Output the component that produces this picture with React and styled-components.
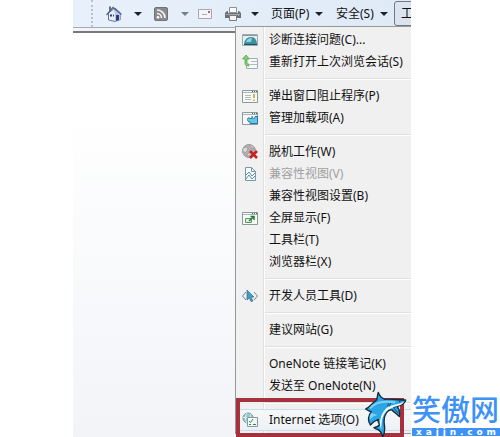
import React from "react"
import styled, { createGlobalStyle, css } from "styled-components"

const GlobalStyle = createGlobalStyle`
  * {
    box-sizing: border-box;
  }

  body {
    margin: 0;
    background: #fff;
    color: #111;
    font: 12px/16px "Noto Sans", "Noto Sans CJK SC", sans-serif;
  }

  button {
    margin: 0;
    padding: 0;
    border: 0;
    background: none;
    color: inherit;
    font: inherit;
    text-align: left;
    white-space: nowrap;
  }
`

const Page = styled.main`
  position: relative;
  padding: 0 89px 0 73px;
`

const Browser = styled.section`
  overflow: hidden;
  background: linear-gradient(#fff 25%, #f2f4f8);
`

const Toolbar = styled.div`
  display: flex;
  align-items: center;
  height: 27px;
  padding-left: 18px;
  background: linear-gradient(to right, #e8f1fb, #dfeaf7);
`

const Grip = styled.span`
  height: 27px;
  margin-right: 13px;
  border-left: 2px dotted #b9c3cf;
`

const ToolButton = styled.button`
  display: flex;
  flex: none;
  align-items: center;
  justify-content: space-between;
  width: ${({ $width }) => $width}px;
  margin-right: ${({ $gap }) => $gap}px;
`

const ToolsButton = styled.button`
  flex: none;
  width: 48px;
  height: 25px;
  padding-left: 6px;
  border: 1px solid #6f7885;
  border-radius: 3px;
  background: #dbe3ee;
`

const Arrow = styled.span`
  border: 4px solid transparent;
  border-top-color: ${({ $dim }) => ($dim ? "#71808f" : "#1b222c")};
  border-bottom: 0;
`

const Edge = styled.div`
  height: 6px;
  border-top: 1px solid #a9adb3;
  border-bottom: 2px solid #77797c;
  background: #f1f4f8;
`

const Content = styled.div`
  display: flex;
  justify-content: flex-end;
  padding-bottom: 3px;
`

const Menu = styled.div`
  position: relative;
  width: 176px;
  margin-top: -7px;
  padding: 2px 0;
  border: 1px solid #979797;
  border-right: 0;
  background: linear-gradient(
    to right,
    #f1f1f1 27px,
    #e0e0e0 27px 28px,
    #fff 28px 29px,
    #f0f0f0 29px
  );
`

const Item = styled.button`
  position: relative;
  display: flex;
  align-items: center;
  width: 100%;
  height: 22px;

  &:disabled {
    color: #a0a0a0;
  }

  ${({ $hot }) =>
    $hot &&
    css`
      border: 1px solid #c9dcec;
      border-width: 1px 0;
      background: linear-gradient(#f6f7f8, #edf1f6);
    `}
`

const IconCell = styled.span`
  display: flex;
  flex: none;
  justify-content: center;
  width: 28px;
  margin-right: 5px;
`

const Separator = styled.hr`
  height: 2px;
  margin: 5px 0 5px 29px;
  border: 0;
  border-top: 1px solid #dfdfdf;
  border-bottom: 1px solid #fff;
`

const Frame = styled.span`
  position: absolute;
  top: -12px;
  right: 7px;
  bottom: -7px;
  left: 0;
  border: 4px solid #a5303e;
`

const Brand = styled.aside`
  position: absolute;
  right: 0;
  bottom: 0;
  display: flex;
  align-items: flex-end;
`

const BrandText = styled.div`
  width: 88px;
  margin-left: 5px;
  padding-bottom: 1px;
  color: #3e92f5;
`

const BrandName = styled.div`
  font: 500 29px/40px "Noto Sans CJK SC", sans-serif;
  white-space: nowrap;
`

const BrandUrl = styled.div`
  display: flex;
  justify-content: space-between;
  padding: 0 4px;
  background: #3e92f5;
  color: #fff;
  font: bold 9px/8px "DejaVu Sans", sans-serif;
`

const Svg = ({ children, size = 16 }) => (
  <svg width={size} height={size} viewBox="0 0 16 16" fill="none" aria-hidden="true">
    {children}
  </svg>
)

const HomeIcon = () => (
  <Svg>
    <path d="M2.500 7v7L9 15.500l5.500-2V7L9 2z" fill="#e6ecfa" stroke="#65739b" />
    <path d="M9 7v8.500l5.500-2V7L7 2z" fill="#b9c6e4" />
    <path d="M.5 9 7 1.500l8.500 7" stroke="#56648b" strokeWidth="1.300" />
    <path d="M3 .5h2v3L3 6z" fill="#626d8b" />
    <path d="M4 8.500h2v2H4zM7 8.500h1v2H7zM10 9h3v5l-3 1z" fill="#303c70" />
  </Svg>
)

const FeedIcon = () => (
  <Svg>
    <rect x="1.500" y="1.500" width="13" height="13" rx="1.500" fill="#8b8b8b" stroke="#727272" />
    <path d="M4 4c4.500 0 8 3.500 8 8M4 7.500c2.500 0 4.500 2 4.500 4.500" stroke="#f5f5f5" strokeWidth="1.600" />
    <circle cx="5" cy="11.300" r="1.300" fill="#fff" />
  </Svg>
)

const MailIcon = () => (
  <Svg>
    <path d="M1.500 3.500h13v9h-13z" fill="#f6f4f7" stroke="#a5a6b6" />
    <path d="M11 5h2v2h-2z" fill="#d0534d" />
    <path d="M5 8.500h5" stroke="#a9a9ba" />
  </Svg>
)

const PrintIcon = () => (
  <Svg>
    <path d="M4.500 1.500h7v5h-7z" fill="#fff" stroke="#8d9299" />
    <path d="M2 5h1v2h10V5h1l2 2v5H0V7z" fill="#6b7074" />
    <path d="M1 8.500h14" stroke="#a5a9ad" />
    <path d="M4.500 9.500h7v5h-7z" fill="#f5f5f5" stroke="#757b80" />
    <path d="M13 9.500h1" stroke="#8fd66b" />
  </Svg>
)

const WindowShape = () => (
  <>
    <path d="M.5 2.500h15v12H.5z" fill="#f7faf9" stroke="#8a9a9b" />
    <path d="M1 4.500h14" stroke="#a9b6b7" />
    <path d="M10 3.500h1m1 0h1m1 0h1" stroke="#4d6063" />
  </>
)

const icons = {
  diagnose: (
    <Svg>
      <path d="M.5 2.500h15v11H.5z" fill="#e5eff0" stroke="#9dabae" />
      <path d="M1 3h14v1H1z" fill="#8499a0" />
      <path d="M2 13c0-5 3-8 7-8 4 0 6 3 6 8z" fill="#3c8f9e" />
      <path d="M4 10c1-3 3-4 6-4l-1 4z" fill="#8ed5d8" />
      <path d="M2 12.500h13" stroke="#174f66" />
    </Svg>
  ),
  reopen: (
    <Svg>
      <path d="M8 4.500h7.500v10h-11V11" fill="#f8fafa" stroke="#a1adb0" />
      <path d="M9 7.500h6M8 10.500h7" stroke="#b0bdc0" />
      <path d="M4 1 .5 5H3v4c0 2 1 3 4 3v-2c-1.500 0-2-.5-2-1.500V5h2.500z" fill="#81cf71" stroke="#4a9f49" strokeWidth=".7" />
    </Svg>
  ),
  popup: (
    <Svg>
      <WindowShape />
      <path d="M3 7.500h6M3 9.500h6M3 11.500h6" stroke="#b2bcbd" />
      <path d="M12 6v4m0 1.500V13" stroke="#c6a729" strokeWidth="1.600" />
    </Svg>
  ),
  addons: (
    <Svg>
      <WindowShape />
      <path
        d="M5.500 9.500c0-2 2-2 2.500-1h2V6.500h5.500v7H8V12c-1.500 0-2.500-1-2.500-2.500z"
        fill="#6cc3e4"
        stroke="#247ca5"
      />
      <path d="M10 6c0 3 3.500 3 3.500 0" fill="#f7faf9" stroke="#247ca5" />
    </Svg>
  ),
  offline: (
    <Svg>
      <circle cx="7" cy="7" r="6.500" fill="#b3b0b1" stroke="#9e999a" />
      <path d="M2 4c3-3 5 1 3 3S3 9 1 7M8 1c0 3 2 3 5 4M5 12c0-3 3-4 5-3" fill="#ded9d9" stroke="#999" />
      <path d="m8 7 7 7m0-7-7 7" stroke="#c92024" strokeWidth="2.600" />
    </Svg>
  ),
  compat: (
    <Svg>
      <path d="M3.500 1.500h6l4 4v9h-10z" fill="#f7fafb" stroke="#7799a7" />
      <path d="M9.500 1.500v4h4" stroke="#7799a7" />
      <path d="m4 9 3-3 3 4 3-3M4 13l3-4 3 4 3-3" stroke="#5b91a8" />
    </Svg>
  ),
  fullscreen: (
    <Svg>
      <WindowShape />
      <path d="M3.500 8.500h6v4h-6z" fill="#dff0dc" stroke="#609567" />
      <path d="M7 11 12 6.500M8.500 6.500H12V10" stroke="#287937" strokeWidth="1.500" />
    </Svg>
  ),
  developer: (
    <Svg>
      <path d="M4 4 .5 8 4 12m8-8 3.500 4-3.500 4" stroke="#6d8490" />
      <path d="m5 2 7 7-3 .3 2 3.700-2 .5-1.500-3.500L5 12z" fill="#4b99bd" stroke="#2b7192" strokeWidth=".7" />
    </Svg>
  ),
  options: (
    <Svg>
      <circle cx="6" cy="6" r="5" fill="#98c8c8" stroke="#699ca0" />
      <path d="M1 5.500h10M5 1c-2 3-2 7 0 10M8 2c1 2 1 4 0 6" stroke="#dff0ed" />
      <path d="M5.500 5.500h10v9h-10z" fill="#f4f8f9" stroke="#829ba1" />
      <path d="m7 9 1.500 1.500L11 7M7 12.500h2m2 0h3" stroke="#348656" />
    </Svg>
  ),
}

const groups = [
  [
    { label: "诊断连接问题(C)...", icon: "diagnose" },
    { label: "重新打开上次浏览会话(S)", icon: "reopen" },
  ],
  [
    { label: "弹出窗口阻止程序(P)", icon: "popup" },
    { label: "管理加载项(A)", icon: "addons" },
  ],
  [
    { label: "脱机工作(W)", icon: "offline" },
    { label: "兼容性视图(V)", icon: "compat", disabled: true },
    { label: "兼容性视图设置(B)" },
    { label: "全屏显示(F)", icon: "fullscreen" },
    { label: "工具栏(T)" },
    { label: "浏览器栏(X)" },
  ],
  [{ label: "开发人员工具(D)", icon: "developer" }],
  [{ label: "建议网站(G)" }],
  [{ label: "OneNote 链接笔记(K)" }, { label: "发送至 OneNote(N)" }],
  [{ label: "Internet 选项(O)", icon: "options", hot: true }],
]

const Shark = () => (
  <svg width="43" height="46" viewBox="12 18 129 138" aria-hidden="true">
    <path
      d="M50 45C53 38 51 30 55 22c3 10 10 17 20 21 20-3 40 3 62 2-1 9-10 16-25 19 6 9 9 19 6 31-7-9-15-12-22-20-7-1-13 3-17 9-6 9-8 20-6 34 2 14 1 28-5 38-2-11-7-18-14-22-4-2-8-3-12-6 8-2 14-4 17-10-4-3-5-10-4-15-9 3-17 8-24 17-9-14-6-30 3-40-6-1-11-4-17-8 10-3 16-15 33-27z"
      fill="#2ba5e3"
      stroke="#142b3c"
      strokeWidth="4"
      strokeLinejoin="round"
    />
    <path d="M132 50c-18 9-34 8-48 16-8 5-20 20-22 34-4 12-3 22 2 34 0-20 2-42 14-54 10-10 22-12 34-17 10-3 16-6 20-13z" fill="#eefaff" />
    <path d="M30 70c12-14 30-20 48-20 12 0 20 2 28 2" fill="none" stroke="#7ad3f5" strokeWidth="6" />
    <path d="M34 84c-4 6-6 14-4 20 6-8 14-12 22-14" fill="#7ad3f5" />
    <path d="m113 64-14 4m3 1c4 6 8 10 12 16M86 54l-4 10m10-10-4 10" fill="none" stroke="#142b3c" strokeWidth="2" />
    <circle cx="119" cy="50" r="2" fill="#142b3c" />
  </svg>
)

const App = () => (
  <>
    <GlobalStyle />
    <Page>
      <Browser>
        <Toolbar>
          <Grip />
          <ToolButton $width={36} $gap={11} aria-label="主页">
            <HomeIcon />
            <Arrow />
          </ToolButton>
          <ToolButton $width={36} $gap={8} aria-label="源">
            <FeedIcon />
            <Arrow $dim />
          </ToolButton>
          <ToolButton $width={16} $gap={12} aria-label="邮件">
            <MailIcon />
          </ToolButton>
          <ToolButton $width={34} $gap={12} aria-label="打印">
            <PrintIcon />
            <Arrow />
          </ToolButton>
          <ToolButton $width={52} $gap={13}>
            页面(P)
            <Arrow />
          </ToolButton>
          <ToolButton $width={52} $gap={6}>
            安全(S)
            <Arrow />
          </ToolButton>
          <ToolsButton>工</ToolsButton>
        </Toolbar>
        <Edge />
        <Content>
          <Menu role="menu">
            {groups.map((items, index) => (
              <React.Fragment key={items[0].label}>
                {index > 0 && <Separator />}
                {items.map(({ label, icon, disabled, hot }) => (
                  <Item key={label} role="menuitem" disabled={disabled} $hot={hot}>
                    <IconCell>{icon && icons[icon]}</IconCell>
                    {label}
                    {hot && <Frame />}
                  </Item>
                ))}
              </React.Fragment>
            ))}
          </Menu>
        </Content>
      </Browser>
      <Brand>
        <Shark />
        <BrandText>
          <BrandName>笑傲网</BrandName>
          <BrandUrl>
            {[..."xajjn.com"].map((letter, index) => (
              <span key={index}>{letter}</span>
            ))}
          </BrandUrl>
        </BrandText>
      </Brand>
    </Page>
  </>
)

export default App
